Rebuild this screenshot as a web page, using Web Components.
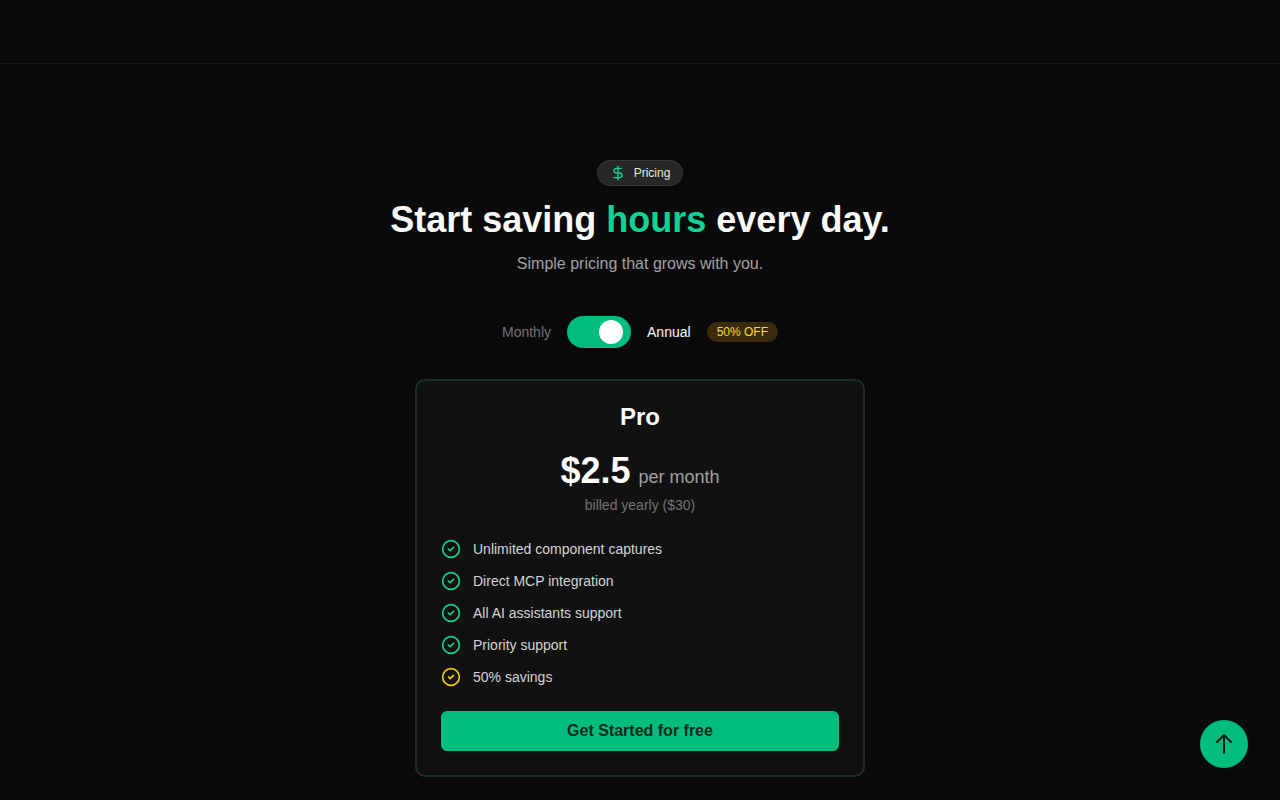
<!DOCTYPE html>
<html lang="en">
<head>
<meta charset="utf-8">
<meta name="viewport" content="width=device-width, initial-scale=1">
<title>Pricing</title>
<style>
  :root {
    --bg: #0a0a0a;
    --card: #111111;
    --text: #fafafa;
    --muted: #a1a1a1;
    --dim: #737373;
    --green: #00bc7d;
    --green-light: #12d192;
    --yellow: #f5c518;
  }
  body {
    margin: 0;
    background: var(--bg);
    color: var(--text);
    font-family: "Liberation Sans", Arial, sans-serif;
  }
</style>
</head>
<body>
<pricing-page></pricing-page>

<script>
class SiteHeader extends HTMLElement {
  constructor() {
    super();
    this.shadow = this.attachShadow({ mode: "open" });
  }
  connectedCallback() {
    this.shadow.innerHTML = `
      <style>
        :host {
          display: block;
          box-sizing: border-box;
          height: 64px;
          border-bottom: 1px solid #1a1a1a;
        }
      </style>
      <slot></slot>
    `;
  }
}
customElements.define("site-header", SiteHeader);

// Small outlined pill with an icon in front of the text
class SectionBadge extends HTMLElement {
  constructor() {
    super();
    this.shadow = this.attachShadow({ mode: "open" });
  }
  connectedCallback() {
    this.shadow.innerHTML = `
      <style>
        :host {
          display: inline-flex;
          align-items: center;
          gap: 8px;
          padding: 4px 12px;
          border: 1px solid #3a3a3c;
          border-radius: 999px;
          background: #272728;
          color: #e5e5e5;
          font-size: 12px;
          line-height: 16px;
        }
        svg {
          width: 16px;
          height: 16px;
          color: var(--green-light);
        }
      </style>
      <svg viewBox="0 0 24 24" fill="none" stroke="currentColor" stroke-width="2" stroke-linecap="round" stroke-linejoin="round" aria-hidden="true">
        <path d="M12 2v20"/>
        <path d="M17 5H9.5a3.5 3.5 0 0 0 0 7h5a3.5 3.5 0 0 1 0 7H6"/>
      </svg>
      <span><slot></slot></span>
    `;
  }
}
customElements.define("section-badge", SectionBadge);

class BillingToggle extends HTMLElement {
  constructor() {
    super();
    this.shadow = this.attachShadow({ mode: "open" });
  }
  connectedCallback() {
    this.shadow.innerHTML = `
      <style>
        :host {
          display: flex;
          align-items: center;
          justify-content: center;
          gap: 16px;
          font-size: 14px;
          line-height: 20px;
        }
        .monthly { color: var(--dim); }
        input {
          appearance: none;
          display: flex;
          box-sizing: border-box;
          width: 64px;
          height: 32px;
          margin: 0;
          padding: 4px 8px;
          border-radius: 999px;
          background: #3f3f46;
          cursor: pointer;
        }
        input::before {
          content: "";
          width: 24px;
          height: 24px;
          border-radius: 50%;
          background: #ffffff;
        }
        input:checked {
          justify-content: flex-end;
          background: var(--green);
        }
        .discount {
          padding: 2px 10px;
          border-radius: 999px;
          background: #3a2c0a;
          color: #fadc33;
          font-size: 12px;
          line-height: 16px;
        }
      </style>
      <span class="monthly">Monthly</span>
      <input id="annual" type="checkbox" role="switch" checked>
      <label for="annual">Annual</label>
      <span class="discount">50% OFF</span>
    `;
  }
}
customElements.define("billing-toggle", BillingToggle);

class PlanFeature extends HTMLElement {
  constructor() {
    super();
    this.shadow = this.attachShadow({ mode: "open" });
  }
  connectedCallback() {
    this.shadow.innerHTML = `
      <style>
        :host {
          display: flex;
          align-items: center;
          gap: 12px;
          color: #d4d4d4;
          font-size: 14px;
          line-height: 20px;
        }
        svg {
          width: 20px;
          height: 20px;
          color: var(--green-light);
        }
        :host([highlight]) svg { color: var(--yellow); }
      </style>
      <svg viewBox="0 0 24 24" fill="none" stroke="currentColor" stroke-width="2" stroke-linecap="round" stroke-linejoin="round" aria-hidden="true">
        <circle cx="12" cy="12" r="10"/>
        <path d="m9 12 2 2 4-4"/>
      </svg>
      <span><slot></slot></span>
    `;
  }
}
customElements.define("plan-feature", PlanFeature);

class PlanCard extends HTMLElement {
  constructor() {
    super();
    this.shadow = this.attachShadow({ mode: "open" });
  }
  connectedCallback() {
    this.shadow.innerHTML = `
      <style>
        :host {
          display: flex;
          flex-direction: column;
          box-sizing: border-box;
          width: 100%;
          max-width: 450px;
          padding: 24px;
          border: 2px solid #1b302a;
          border-radius: 10px;
          background: var(--card);
          text-align: center;
        }
        h2 {
          margin: 0 0 22px;
          font-size: 24px;
          line-height: 24px;
        }
        .price {
          display: flex;
          align-items: baseline;
          justify-content: center;
          gap: 8px;
          margin-bottom: 4px;
        }
        .amount {
          font-size: 36px;
          font-weight: bold;
          line-height: 40px;
          color: #ffffff;
        }
        .period {
          font-size: 18px;
          line-height: 28px;
          color: var(--muted);
        }
        .billed {
          margin: 0 0 24px;
          font-size: 14px;
          line-height: 20px;
          color: var(--dim);
        }
        .features {
          display: flex;
          flex-direction: column;
          gap: 12px;
          margin-bottom: 24px;
          text-align: left;
        }
        button {
          height: 40px;
          padding: 0 16px;
          border: 0;
          border-radius: 6px;
          background: var(--green);
          color: #0b2a20;
          font: bold 16px/24px "Liberation Sans", Arial, sans-serif;
          cursor: pointer;
        }
      </style>
      <h2>${this.getAttribute("name")}</h2>
      <div class="price">
        <span class="amount">${this.getAttribute("amount")}</span>
        <span class="period">${this.getAttribute("period")}</span>
      </div>
      <p class="billed">${this.getAttribute("billed")}</p>
      <div class="features"><slot></slot></div>
      <button type="button">Get Started for free</button>
    `;
  }
}
customElements.define("plan-card", PlanCard);

class BackToTop extends HTMLElement {
  constructor() {
    super();
    this.shadow = this.attachShadow({ mode: "open" });
  }
  connectedCallback() {
    this.shadow.innerHTML = `
      <style>
        :host {
          position: fixed;
          right: 32px;
          bottom: 32px;
        }
        button {
          display: flex;
          align-items: center;
          justify-content: center;
          width: 48px;
          height: 48px;
          padding: 0;
          border: 0;
          border-radius: 50%;
          background: var(--green);
          color: #0a1f18;
          cursor: pointer;
        }
        svg {
          width: 24px;
          height: 24px;
        }
      </style>
      <button type="button" aria-label="Back to top">
        <svg viewBox="0 0 24 24" fill="none" stroke="currentColor" stroke-width="2" stroke-linecap="round" stroke-linejoin="round" aria-hidden="true">
          <path d="M5 10l7-7m0 0l7 7m-7-7v18"/>
        </svg>
      </button>
    `;
    this.shadow.querySelector("button").addEventListener("click", () => {
      window.scrollTo({ top: 0, behavior: "smooth" });
    });
  }
}
customElements.define("back-to-top", BackToTop);

class PricingPage extends HTMLElement {
  constructor() {
    super();
    this.shadow = this.attachShadow({ mode: "open" });
  }
  connectedCallback() {
    this.shadow.innerHTML = `
      <style>
        :host { display: block; }
        main {
          display: flex;
          flex-direction: column;
          align-items: center;
          padding: 96px 16px 23px;
        }
        h1 {
          margin: 14px 0 12px;
          font-size: 36px;
          line-height: 40px;
          text-align: center;
        }
        .accent { color: var(--green-light); }
        p {
          margin: 0 0 40px;
          font-size: 16px;
          line-height: 24px;
          color: var(--muted);
          text-align: center;
        }
        billing-toggle { margin-bottom: 31px; }
      </style>
      <site-header></site-header>
      <main>
        <section-badge>Pricing</section-badge>
        <h1>Start saving <span class="accent">hours</span> every day.</h1>
        <p>Simple pricing that grows with you.</p>
        <billing-toggle></billing-toggle>
        <plan-card name="Pro" amount="$2.5" period="per month" billed="billed yearly ($30)">
          <plan-feature>Unlimited component captures</plan-feature>
          <plan-feature>Direct MCP integration</plan-feature>
          <plan-feature>All AI assistants support</plan-feature>
          <plan-feature>Priority support</plan-feature>
          <plan-feature highlight>50% savings</plan-feature>
        </plan-card>
      </main>
      <back-to-top></back-to-top>
    `;
  }
}
customElements.define("pricing-page", PricingPage);
</script>
</body>
</html>
